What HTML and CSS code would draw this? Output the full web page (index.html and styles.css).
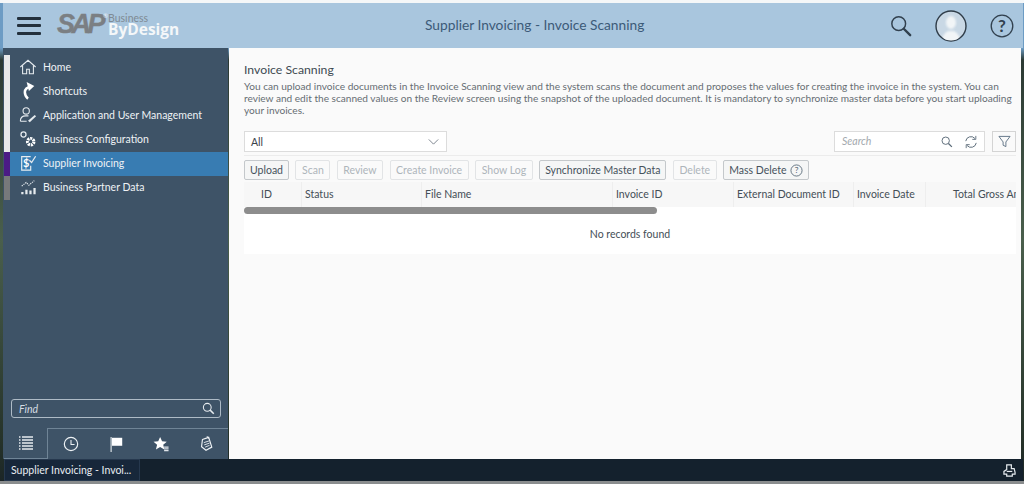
FILE: index.html
```html
<!DOCTYPE html>
<html lang="en">
<head>
<meta charset="utf-8">
<title>Supplier Invoicing - Invoice Scanning</title>
<link rel="stylesheet" href="styles.css">
</head>
<body>
<div class="window">
  <header class="topbar">
    <button class="hamburger" aria-label="Menu"><span></span><span></span><span></span></button>
    <div class="logo">
      <span class="logo-sap">SAP</span>
      <span class="logo-reg">®</span>
      <span class="logo-words"><span class="logo-business">Business</span><span class="logo-bd">ByDesign</span></span>
    </div>
    <div class="top-title">Supplier Invoicing - Invoice Scanning</div>
    <div class="top-actions">
      <svg class="ic-search" viewBox="0 0 24 24"><circle cx="9.5" cy="9.5" r="7.5" fill="none" stroke="#31404e" stroke-width="1.6"/><path d="M15 15l7 7" stroke="#31404e" stroke-width="2.6" stroke-linecap="round"/></svg>
      <svg class="ic-avatar" viewBox="0 0 32 32"><defs><clipPath id="av"><circle cx="16" cy="16" r="14.500"/></clipPath></defs><circle cx="16" cy="16" r="15" fill="#c9d8e5" stroke="#2f3c48" stroke-width="1.400"/><g clip-path="url(#av)"><g class="avatar-figure"><ellipse cx="16" cy="12.500" rx="5" ry="6.500" fill="#f2f5f7"/><path d="M7 32c0-7 3-9 6-11h6c3 2 6 4 6 11z" fill="#f2f5f7"/></g></g></svg>
      <svg class="ic-help" viewBox="0 0 24 24"><circle cx="12" cy="12" r="10.800" fill="none" stroke="#31404e" stroke-width="1.300"/><text x="12" y="18" text-anchor="middle" class="ic-help-q">?</text></svg>
    </div>
  </header>
  <div class="body">
    <aside class="sidebar">
      <nav class="nav">
        <a class="nav-item"><svg viewBox="0 0 20 20"><path d="M1.500 10L10 2.500 18.500 10M4 8.500V17.500h4.500v-5h3v5H16V8.500" fill="none" stroke="#e6ebef" stroke-width="1.200"/></svg><span>Home</span></a>
        <a class="nav-item"><svg viewBox="0 0 20 20"><path d="M13 5.500C9 5.500 6.500 8 6.500 11.500c0 2.800 1 5 3.500 7" fill="none" stroke="#fff" stroke-width="2.800"/><path d="M8.500 0l8.500 4.500-6 5.500z" fill="#fff"/></svg><span>Shortcuts</span></a>
        <a class="nav-item"><svg viewBox="0 0 20 20"><circle cx="8" cy="5.500" r="3.500" fill="none" stroke="#e6ebef" stroke-width="1.200"/><path d="M1.500 17c0-4 2.500-6 6-6h3M1.500 17h7" fill="none" stroke="#e6ebef" stroke-width="1.200"/><path d="M10 16.500l7.500-6.500 1.500 1.500-7 6.500z" fill="#e6ebef"/></svg><span>Application and User Management</span></a>
        <a class="nav-item"><svg viewBox="0 0 20 20"><circle cx="5" cy="5" r="2.800" fill="none" stroke="#e6ebef" stroke-width="1.400"/><circle cx="13" cy="13" r="3.500" fill="none" stroke="#fff" stroke-width="3.600" stroke-dasharray="2.200 .9"/><circle cx="13" cy="13" r="1.600" fill="#3e5367"/></svg><span>Business Configuration</span></a>
        <a class="nav-item active"><svg viewBox="0 0 20 20"><path d="M13 3H3v15h10v-5" fill="none" stroke="#e6ebef" stroke-width="1.300"/><text x="8" y="14.500" text-anchor="middle" class="ic-dollar">$</text><path d="M11.500 7l2.500 2.500 4.500-7" fill="none" stroke="#e6ebef" stroke-width="1.400"/></svg><span>Supplier Invoicing</span></a>
        <a class="nav-item partner"><svg viewBox="0 0 20 20"><path d="M3 9l5-4 3 3 6-5" fill="none" stroke="#e6ebef" stroke-width="1.200" stroke-dasharray="1.500 1"/><path d="M2.500 15.500h2.500v2.500H2.500zM7 13h2.500v5H7zM11.500 14h2.500v4h-2.500zM16 11h2.500v7H16z" fill="#e6ebef"/></svg><span>Business Partner Data</span></a>
      </nav>
      <div class="find-wrap">
        <div class="find"><span>Find</span><svg viewBox="0 0 16 16"><circle cx="6.500" cy="6.500" r="4.800" fill="none" stroke="#e6ebef" stroke-width="1.300"/><path d="M10 10l4.500 4.500" stroke="#e6ebef" stroke-width="1.800"/></svg></div>
      </div>
      <div class="tabs">
        <div class="tab selected"><svg viewBox="0 0 16 16"><path d="M1 2h1.500M4 2h11M1 5h1.500M4 5h11M1 8h1.500M4 8h11M1 11h1.500M4 11h11M1 14h1.500M4 14h11" stroke="#e6ebef" stroke-width="1.300"/></svg></div>
        <div class="tab"><svg viewBox="0 0 18 18"><circle cx="9" cy="9" r="7.500" fill="none" stroke="#eef2f5" stroke-width="1.300"/><path d="M9 4.500V9.500h4" fill="none" stroke="#eef2f5" stroke-width="1.200"/></svg></div>
        <div class="tab"><svg viewBox="0 0 18 18"><path d="M3.500 1v17" stroke="#dfe5ea" stroke-width="1.300"/><path d="M4.500 2h11.500v9H4.500z" fill="#fff"/></svg></div>
        <div class="tab"><svg viewBox="0 0 18 18"><path d="M8 1l2.200 5 5.300.4-4 3.500 1.300 5.300L8 12.400 3.300 15.200l1.300-5.300-4-3.500 5.300-.4z" fill="#fff"/><path d="M12.500 12.500h5M12.500 14.500h5M12.500 16.500h5" stroke="#dfe5ea" stroke-width="1.300"/></svg></div>
        <div class="tab"><svg viewBox="0 0 18 18"><path d="M5 4l7-2.500 3.500 11-6.500 3.500-5-4z" fill="none" stroke="#eef2f5" stroke-width="1.300"/><path d="M6.500 7.500l6-2M7 10l6-2M8 12.500l5-2" stroke="#eef2f5" stroke-width="1"/><path d="M10 0l2 3" stroke="#eef2f5"/></svg></div>
      </div>
    </aside>
    <main class="main">
      <h1 class="page-title">Invoice Scanning</h1>
      <p class="page-desc">You can upload invoice documents in the Invoice Scanning view and the system scans the document and proposes the values for creating the invoice in the system. You can review and edit the scanned values on the Review screen using the snapshot of the uploaded document. It is mandatory to synchronize master data before you start uploading your invoices.</p>
      <div class="filterbar">
        <div class="select"><span>All</span><svg viewBox="0 0 12 7"><path d="M.5 .5L6 6l5.500-5.500" fill="none" stroke="#6a7480" stroke-width="1"/></svg></div>
        <div class="filter-right">
          <div class="searchbox"><span class="ph">Search</span>
            <svg class="s1" viewBox="0 0 14 14"><circle cx="5.500" cy="5.500" r="4.300" fill="none" stroke="#5a6a78" stroke-width="1.100"/><path d="M8.700 8.700l4 4" stroke="#5a6a78" stroke-width="1.500"/></svg>
            <svg class="s2" viewBox="0 0 16 16"><path d="M2 7a6 6 0 0 1 10.500-3M14 9a6 6 0 0 1-10.500 3" fill="none" stroke="#5a6a78" stroke-width="1.100"/><path d="M13.500 1v4h-4M2.500 15v-4h4" fill="none" stroke="#5a6a78" stroke-width="1"/></svg>
          </div>
          <button class="filter-btn" aria-label="Filter"><svg viewBox="0 0 14 14"><path d="M1 1.500h12L8.500 7.500v5l-3-1.500V7.500z" fill="none" stroke="#5e7184" stroke-width="1"/></svg></button>
        </div>
      </div>
      <div class="toolbar">
        <button class="btn">Upload</button>
        <button class="btn off">Scan</button>
        <button class="btn off">Review</button>
        <button class="btn off">Create Invoice</button>
        <button class="btn off">Show Log</button>
        <button class="btn">Synchronize Master Data</button>
        <button class="btn off">Delete</button>
        <button class="btn">Mass Delete <svg viewBox="0 0 14 14"><circle cx="7" cy="7" r="6" fill="none" stroke="#4e6070" stroke-width=".9"/><text x="7" y="10" text-anchor="middle" class="ic-q">?</text></svg></button>
      </div>
      <div class="table">
        <div class="thead">
          <div class="th c-id">ID</div>
          <div class="th">Status</div>
          <div class="th">File Name</div>
          <div class="th">Invoice ID</div>
          <div class="th">External Document ID</div>
          <div class="th">Invoice Date</div>
          <div class="th c-total">Total Gross Amount</div>
        </div>
        <div class="scrolltrack"><div class="scrollthumb"></div></div>
        <div class="empty">No records found</div>
      </div>
    </main>
  </div>
  <footer class="taskbar">
    <div class="task">Supplier Invoicing - Invoi...</div>
    <svg class="tray" viewBox="0 0 14 14"><path d="M4 1h5v4h3l1 4v2H10v2H4v-2H1V8l3-2z" fill="none" stroke="#e6ebef" stroke-width="1.300"/><path d="M4 8h6" stroke="#e6ebef" stroke-width="1.300"/></svg>
  </footer>
</div>
</body>
</html>
```
FILE: styles.css
```css
* { box-sizing: border-box; }
html, body { margin: 0; height: 100%; }
body {
  width: 1024px;
  height: 484px;
  overflow: hidden;
  font-family: Lato, "Open Sans", sans-serif;
  background: linear-gradient(180deg, #6d9cc4 0, #6d9cc4 48px, #2c3a34 60px, #4a5f4c 240px, #26332a 440px, #1b2526 484px);
}
.window {
  padding: 3px 1px 3px 3px;
  height: 484px;
  display: flex;
  flex-direction: column;
  background: linear-gradient(180deg, #f5f7f8 0, #f5f7f8 3px, transparent 3px), linear-gradient(0deg, #8a8d8e 0, #8a8d8e 3px, transparent 3px);
}
.topbar {
  height: 45px;
  flex: none;
  background: #a9c6de;
  display: flex;
  align-items: center;
  position: relative;
}
.hamburger {
  width: 24px;
  height: 18px;
  margin-left: 14px;
  padding: 0;
  border: 0;
  background: none;
  display: flex;
  flex-direction: column;
  justify-content: space-between;
}
.hamburger span { display: block; height: 3px; background: #23303c; border-radius: 1px; }
.logo { display: flex; margin-left: 16px; align-items: flex-start; height: 26px; margin-top: -3px; }
.logo-sap { font: italic 700 27px/26px "Liberation Sans", sans-serif; color: #7b7f83; letter-spacing: -3.500px; -webkit-text-stroke: .4px #7b7f83; }
.logo-reg { font-size: 6px; line-height: 10px; margin-left: 1px; color: #eef2f5; }
.logo-words { display: flex; flex-direction: column; }
.logo-business { font-size: 10.500px; line-height: 10px; color: #7f8a94; margin-top: 2px; }
.logo-bd { font: 700 15.500px/16px "Open Sans", sans-serif; color: #f4f7f9; margin-top: -2px; }
.top-title {
  position: absolute;
  left: 422px;
  top: 13px;
  font-size: 13.750px;
  line-height: 18px;
  color: #3c5a78;
}
.top-actions { margin-left: auto; display: flex; align-items: center; margin-right: 9px; }
.ic-search { width: 22px; height: 22px; margin-right: 23px; }
.ic-avatar { width: 32px; height: 32px; margin-right: 23px; }
.avatar-figure { filter: blur(1px); }
.ic-help { width: 24px; height: 24px; }
.ic-help-q { font-size: 17px; font-weight: 700; fill: #31404e; font-family: Lato, sans-serif; }
.ic-dollar { font-size: 12px; font-weight: 700; fill: #fff; font-family: Lato, sans-serif; }
.body { flex: 1; display: flex; min-height: 0; }
.sidebar {
  width: 225px;
  flex: none;
  background: #3e5367;
  display: flex;
  flex-direction: column;
  padding-left: 1px;
  padding-top: 7px;
}
.nav { display: flex; flex-direction: column; border-left: 6px solid #e8e9e9; padding-top: 1px; }
.nav-item {
  height: 24px;
  display: flex;
  align-items: center;
  color: #eef2f5;
  font-size: 10.500px;
  padding: 0 0 3px 9px;
  position: relative;
}
.nav-item svg { width: 18px; height: 18px; margin-right: 6px; flex: none; }
.nav-item.active { background: #387cb2; }
.nav-item.active::before, .nav-item.partner::before {
  content: "";
  position: absolute;
  left: -6px;
  top: 0;
  bottom: 0;
  width: 6px;
}
.nav-item.active::before { background: #4b1b85; }
.nav-item.partner::before { background: #77797b; }
.find-wrap { margin-top: auto; padding: 0 7px 10px 7px; }
.find {
  height: 19px;
  border: 1px solid #aebbc6;
  border-radius: 3px;
  display: flex;
  align-items: center;
  justify-content: space-between;
  padding: 0 5px 0 7px;
  color: #d5dde3;
  font-size: 10.500px;
  font-style: italic;
}
.find svg { width: 13px; height: 13px; }
.tabs { display: flex; height: 31px; }
.tab {
  flex: 1;
  display: flex;
  align-items: center;
  justify-content: center;
  border-top: 1px solid #6f8496;
}
.tab.selected {
  flex: 0 0 44px;
  border-top: 0;
  border-right: 1px solid #6f8496;
  border-bottom: 1px solid #6f8496;
}
.tab svg { width: 16px; height: 16px; }
.main {
  flex: 1;
  min-width: 0;
  background: #fafafa;
  padding: 14px 5px 0 15px;
  margin-right: 2px;
  margin-left: 1px;
}
.page-title { margin: 0; font-size: 12.250px; font-weight: 400; line-height: 16px; color: #404a52; }
.page-desc { margin: 2px 0 0; font-size: 10.100px; line-height: 12px; color: #666d73; }
.filterbar { margin-top: 15px; height: 25px; display: flex; justify-content: space-between; align-items: flex-start; border-bottom: 1px solid #ececec; }
.select {
  width: 203px;
  height: 21px;
  background: #fff;
  border: 1px solid #dcdcdc;
  display: flex;
  align-items: center;
  justify-content: space-between;
  padding: 0 7px 0 6px;
  font-size: 10.500px;
  color: #39424a;
}
.select svg { width: 11px; height: 6px; }
.filter-right { display: flex; gap: 7px; }
.searchbox {
  width: 151px;
  height: 21px;
  background: #fff;
  border: 1px solid #dcdcdc;
  display: flex;
  align-items: center;
  padding: 0 6px 0 7px;
  font-size: 10.500px;
}
.ph { font-style: italic; color: #a3a9ae; margin-right: auto; padding-bottom: 2px; }
.searchbox .s1 { width: 12px; height: 12px; margin-right: 11px; }
.searchbox .s2 { width: 14px; height: 14px; }
.filter-btn {
  width: 24px;
  height: 21px;
  padding: 0;
  background: #fafafa;
  border: 1px solid #d4d4d4;
  display: flex;
  align-items: center;
  justify-content: center;
}
.filter-btn svg { width: 13px; height: 13px; }
.toolbar { display: flex; gap: 6.500px; margin-top: 4px; height: 20px; }
.btn {
  height: 20px;
  padding: 0 5px;
  background: #f5f6f6;
  border: 1px solid #c4c8cb;
  border-radius: 2px;
  font: 10.500px/18px Lato, "Open Sans", sans-serif;
  color: #46525c;
  display: flex;
  align-items: center;
  gap: 3px;
  white-space: nowrap;
}
.btn.off { color: #aeb5ba; border-color: #e2e4e6; background: #fafafa; padding: 0 5.500px; }
.btn svg { width: 13px; height: 13px; }
.ic-q { font-size: 9px; fill: #4e6070; }
.table { margin-top: 2px; width: 772px; overflow: hidden; }
.thead {
  display: grid;
  grid-template-columns: 57px 120px 191px 121px 120px 72px 91px;
  height: 25px;
  background: #f7f7f7;
}
.th {
  font-size: 10.500px;
  line-height: 24px;
  color: #444e56;
  padding-left: 3px;
  border-left: 1px solid #eeeeee;
  white-space: nowrap;
  overflow: hidden;
}
.c-id { text-align: center; border-left: 0; padding: 0 12px 0 0; }
.c-total { padding-left: 27px; }
.scrolltrack { height: 7px; background: #fff; }
.scrollthumb { width: 413px; height: 7px; border-radius: 4px; background: #8d8d8d; }
.empty {
  height: 40px;
  background: #fff;
  text-align: center;
  font-size: 10.500px;
  line-height: 40px;
  color: #444e56;
}
.taskbar {
  height: 22px;
  flex: none;
  background: #14212d;
  display: flex;
  align-items: stretch;
  justify-content: space-between;
  margin-left: 1px;
}
.task {
  width: 136px;
  background: #17273a;
  border: 1px solid #26384e;
  color: #e8edf1;
  font-size: 10.500px;
  line-height: 20px;
  padding-left: 6px;
  white-space: nowrap;
  overflow: hidden;
}
.tray { width: 13px; height: 13px; align-self: center; margin-right: 7px; }
```
